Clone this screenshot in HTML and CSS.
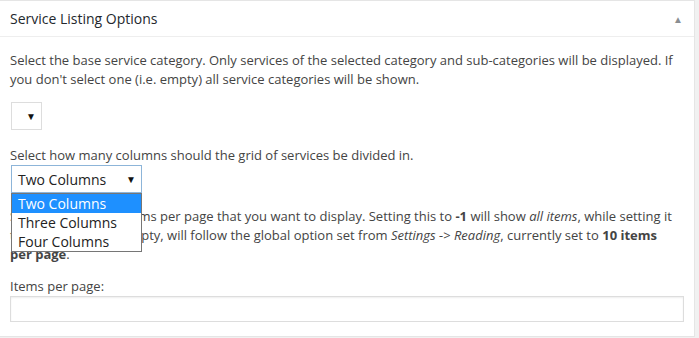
FILE: index.html
```html
<!DOCTYPE html>
<html lang="en">
<head>
    <meta charset="UTF-8">
    <title>Service Listing Options</title>
    <link rel="stylesheet" href="styles.css">
</head>
<body>
    <div class="postbox">
        <div class="postbox-header">
            <h2 class="postbox-title">Service Listing Options</h2>
            <span class="toggle-arrow">&#9650;</span>
        </div>

        <div class="inside">
            <p class="desc">Select the base service category. Only services of the selected category and sub-categories will be displayed. If you don't select one (i.e. empty) all service categories will be shown.</p>
            <div class="fake-select empty-select">
                <span class="select-value"></span>
                <span class="select-arrow">&#9660;</span>
            </div>

            <p class="desc tight">Select how many columns should the grid of services be divided in.</p>
            <div class="select-wrap">
                <div class="fake-select columns-select">
                    <span class="select-value">Two Columns</span>
                    <span class="select-arrow">&#9660;</span>
                </div>
                <ul class="select-options">
                    <li class="selected">Two Columns</li>
                    <li>Three Columns</li>
                    <li>Four Columns</li>
                </ul>
            </div>

            <p class="desc">Set the number of items per page that you want to display. Setting this to <strong>-1</strong> will show <em>all items</em>, while setting it to zero, or leave it empty, will follow the global option set from <em>Settings -&gt; Reading</em>, currently set to <strong>10 items<br>per page</strong>.</p>

            <label class="field-label" for="perPage">Items per page:</label>
            <input class="text-input" id="perPage" type="text">
        </div>
    </div>
</body>
</html>
```

FILE: styles.css
```css
body {
    margin: 0;
    background: #f1f1f1;
    font-family: "Open Sans", sans-serif;
    font-size: 13px;
    color: #444;
}

.postbox {
    width: 695px;
    height: 337px;
    box-sizing: border-box;
    background: #fff;
    border: 1px solid #e5e5e5;
    border-left: none;
}

.postbox-header {
    height: 35px;
    border-bottom: 1px solid #eee;
    display: flex;
    align-items: center;
    justify-content: space-between;
    padding: 0 11px 0 10px;
}

.postbox-title {
    margin: 0;
    font-size: 14px;
    font-weight: 400;
    color: #23282d;
    line-height: 1;
}

.toggle-arrow {
    font-size: 10px;
    color: #8a8e92;
}

.inside {
    padding: 0 11px 0 10px;
}

.desc {
    margin: 14px 0 13px;
    line-height: 19px;
}

.desc.tight {
    margin: 16px 0 0;
}

.fake-select {
    box-sizing: border-box;
    height: 28px;
    border: 1px solid #ddd;
    display: flex;
    align-items: center;
    justify-content: space-between;
    background: #fff;
    color: #222;
}

.empty-select {
    width: 31px;
    margin-left: 1px;
    padding: 0 5px 0 8px;
}

.select-arrow {
    font-size: 10px;
    color: #111;
}

.select-wrap {
    position: relative;
    width: 131px;
    margin-left: 1px;
}

.columns-select {
    width: 131px;
    padding: 0 5px 0 6px;
    border-color: #8db5d9;
    font-size: 14px;
}

.select-options {
    position: absolute;
    top: 28px;
    left: 0;
    width: 131px;
    box-sizing: border-box;
    margin: 0;
    padding: 0;
    list-style: none;
    background: #fff;
    border: 1px solid #767676;
    font-size: 14px;
    color: #222;
}

.select-options li {
    height: 19px;
    line-height: 19px;
    padding-left: 6px;
}

.select-options li.selected {
    background: #1e90ff;
    color: #fff;
}

.field-label {
    display: block;
    line-height: 19px;
}

.text-input {
    display: block;
    box-sizing: border-box;
    width: 674px;
    height: 26px;
    border: 1px solid #ddd;
    box-shadow: inset 0 1px 2px rgba(0, 0, 0, 0.07);
    font-family: "Open Sans", sans-serif;
}
```
